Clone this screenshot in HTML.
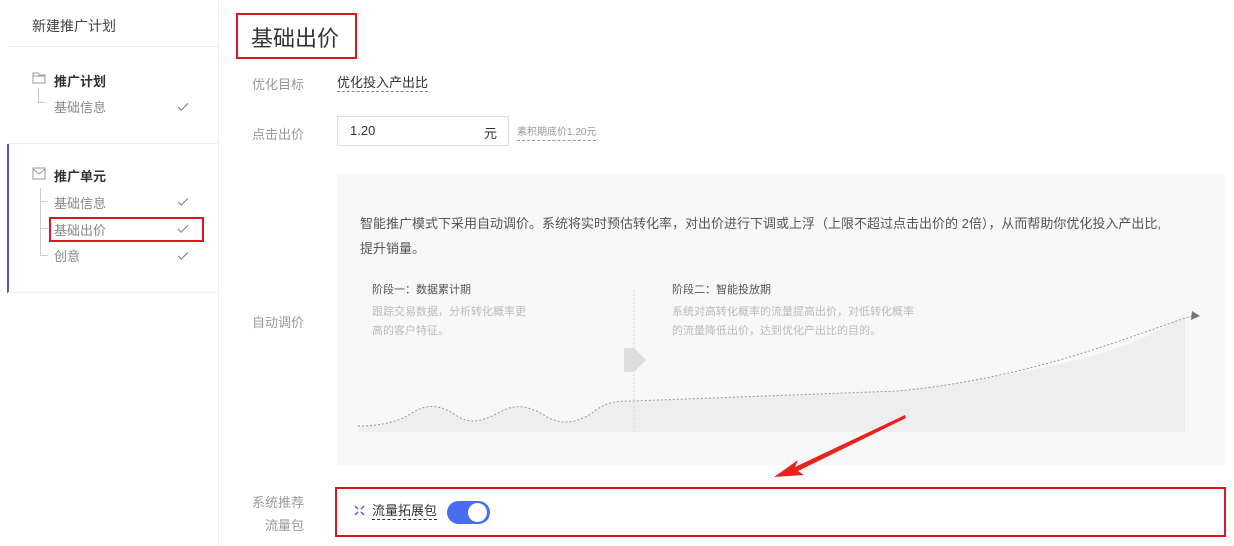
<!DOCTYPE html>
<html><head><meta charset="utf-8"><style>
*{margin:0;padding:0;box-sizing:border-box}
body{width:1234px;height:546px;background:#fff;font-family:"Liberation Sans","Noto Sans CJK SC",sans-serif;color:#333;position:relative;overflow:hidden;font-size:13px}
.a{position:absolute;white-space:nowrap}
.g{color:#999}
.ck{position:absolute;left:178px;width:10px;height:5px;border-left:1.5px solid #777;border-bottom:1.5px solid #777;transform:rotate(-45deg)}
</style></head><body>
<div class="a" style="left:0;top:0;width:219px;height:546px;border-right:1px solid #eee"></div>
<div class="a" style="left:32px;top:16px;font-size:14px;color:#444">新建推广计划</div>
<div class="a" style="left:8px;top:46px;width:211px;height:1px;background:#eee"></div>
<svg class="a" style="left:32px;top:72px" width="14" height="12"><path d="M1 1h5l1.5 2H13v8H1z M1 4h12" fill="none" stroke="#999"/></svg>
<div class="a" style="left:54px;top:71px;font-weight:bold">推广计划</div>
<div class="a" style="left:38px;top:88px;width:1px;height:14px;background:#ccc"></div>
<div class="a" style="left:38px;top:102px;width:8px;height:1px;background:#ccc"></div>
<div class="a g" style="left:54px;top:97px;color:#888">基础信息</div>
<div class="ck" style="top:103px"></div>
<div class="a" style="left:8px;top:143px;width:211px;height:1px;background:#eee"></div>
<div class="a" style="left:7px;top:144px;width:2px;height:149px;background:#4a5fd6"></div>
<div class="a" style="left:8px;top:292px;width:211px;height:1px;background:#eee"></div>
<svg class="a" style="left:32px;top:167px" width="14" height="13"><path d="M1 1h12v11H1z M1 2l6 5 6-5" fill="none" stroke="#999"/></svg>
<div class="a" style="left:54px;top:166px;font-weight:bold">推广单元</div>
<div class="a" style="left:40px;top:188px;width:1px;height:68px;background:#ccc"></div>
<div class="a" style="left:40px;top:201px;width:8px;height:1px;background:#ccc"></div>
<div class="a" style="left:40px;top:228px;width:8px;height:1px;background:#ccc"></div>
<div class="a" style="left:40px;top:255px;width:8px;height:1px;background:#ccc"></div>
<div class="a" style="left:54px;top:193px;color:#888">基础信息</div><div class="ck" style="top:198px"></div>
<div class="a" style="left:54px;top:220px;color:#888">基础出价</div><div class="ck" style="top:225px"></div>
<div class="a" style="left:49px;top:217px;width:155px;height:25px;border:2px solid #e0141e"></div>
<div class="a" style="left:54px;top:246px;color:#888">创意</div><div class="ck" style="top:252px"></div>

<div class="a" style="left:236px;top:13px;width:121px;height:46px;border:2px solid #e0141e"></div>
<div class="a" style="left:251px;top:21px;font-size:22px;color:#333">基础出价</div>
<div class="a g" style="left:252px;top:74px">优化目标</div>
<div class="a" style="left:337px;top:74px;border-bottom:1px dashed #888;line-height:17px">优化投入产出比</div>
<div class="a g" style="left:252px;top:124px">点击出价</div>
<div class="a" style="left:337px;top:116px;width:172px;height:30px;border:1px solid #ddd"></div>
<div class="a" style="left:350px;top:123px">1.20</div>
<div class="a" style="left:484px;top:123px">元</div>
<div class="a g" style="left:517px;top:125px;font-size:10px;border-bottom:1px dashed #999;line-height:15px">素积期底价1.20元</div>

<div class="a" style="left:337px;top:173px;width:888px;height:292px;background:#f8f8f8"></div>
<div class="a" style="left:360px;top:213px;color:#555">智能推广模式下采用自动调价。系统将实时预估转化率，对出价进行下调或上浮（上限不超过点击出价的 2倍），从而帮助你优化投入产出比,</div>
<div class="a" style="left:360px;top:238px;color:#555">提升销量。</div>
<div class="a" style="left:372px;top:281px;font-size:11px;color:#555">阶段一：数据累计期</div>
<div class="a" style="left:372px;top:303px;font-size:11px;color:#bbb;line-height:19px">跟踪交易数据，分析转化概率更<br>高的客户特征。</div>
<div class="a" style="left:672px;top:281px;font-size:11px;color:#555">阶段二：智能投放期</div>
<div class="a" style="left:672px;top:303px;font-size:11px;color:#bbb;line-height:19px">系统对高转化概率的流量提高出价，对低转化概率<br>的流量降低出价，达到优化产出比的目的。</div>
<svg class="a" style="left:337px;top:173px" width="888" height="292">
<path d="M21 253 C40 253 60 250 75 240 C90 230 105 232 120 243 C135 253 150 246 165 238 C180 230 195 234 210 244 C225 252 240 250 255 240 C270 228 280 228 296 228 L560 218 C700 200 800 180 848 140 L848 259 L21 259Z" fill="#eee"/>
<path d="M21 253 C40 253 60 250 75 240 C90 230 105 232 120 243 C135 253 150 246 165 238 C180 230 195 234 210 244 C225 252 240 250 255 240 C270 228 280 228 296 228 L560 218 C700 205 800 160 855 143" fill="none" stroke="#999" stroke-dasharray="2 2"/>
<path d="M855 138 L863 143 L854 147Z" fill="#777"/>
<line x1="297" y1="117" x2="297" y2="259" stroke="#ddd" stroke-dasharray="2 2"/>
<path d="M287 175 h10 l12 12 l-12 12 h-10z" fill="#ddd"/>
</svg>
<div class="a g" style="left:252px;top:312px">自动调价</div>
<div class="a g" style="left:252px;top:492px">系统推荐</div>
<div class="a g" style="left:265px;top:515px">流量包</div>
<div class="a" style="left:335px;top:487px;width:891px;height:50px;border:2px solid #e0141e"></div>
<svg class="a" style="left:354px;top:505px" width="11" height="11"><path d="M1 1l3 3M10 1l-3 3M1 10l3-3M10 10l-3-3" stroke="#4a5fd6" stroke-width="1.5"/></svg>
<div class="a" style="left:372px;top:503px;border-bottom:1px dashed #333;line-height:16px">流量拓展包</div>
<div class="a" style="left:447px;top:501px;width:43px;height:23px;border-radius:12px;background:#4a6cf0"></div>
<div class="a" style="left:468px;top:503px;width:19px;height:19px;border-radius:50%;background:#fff"></div>
<svg class="a" style="left:760px;top:405px" width="160" height="85"><path d="M145 10 L35 62 L38 55 L14 72 L44 70 L38 66 L146 13Z" fill="#e8231e"/></svg>
</body></html>
